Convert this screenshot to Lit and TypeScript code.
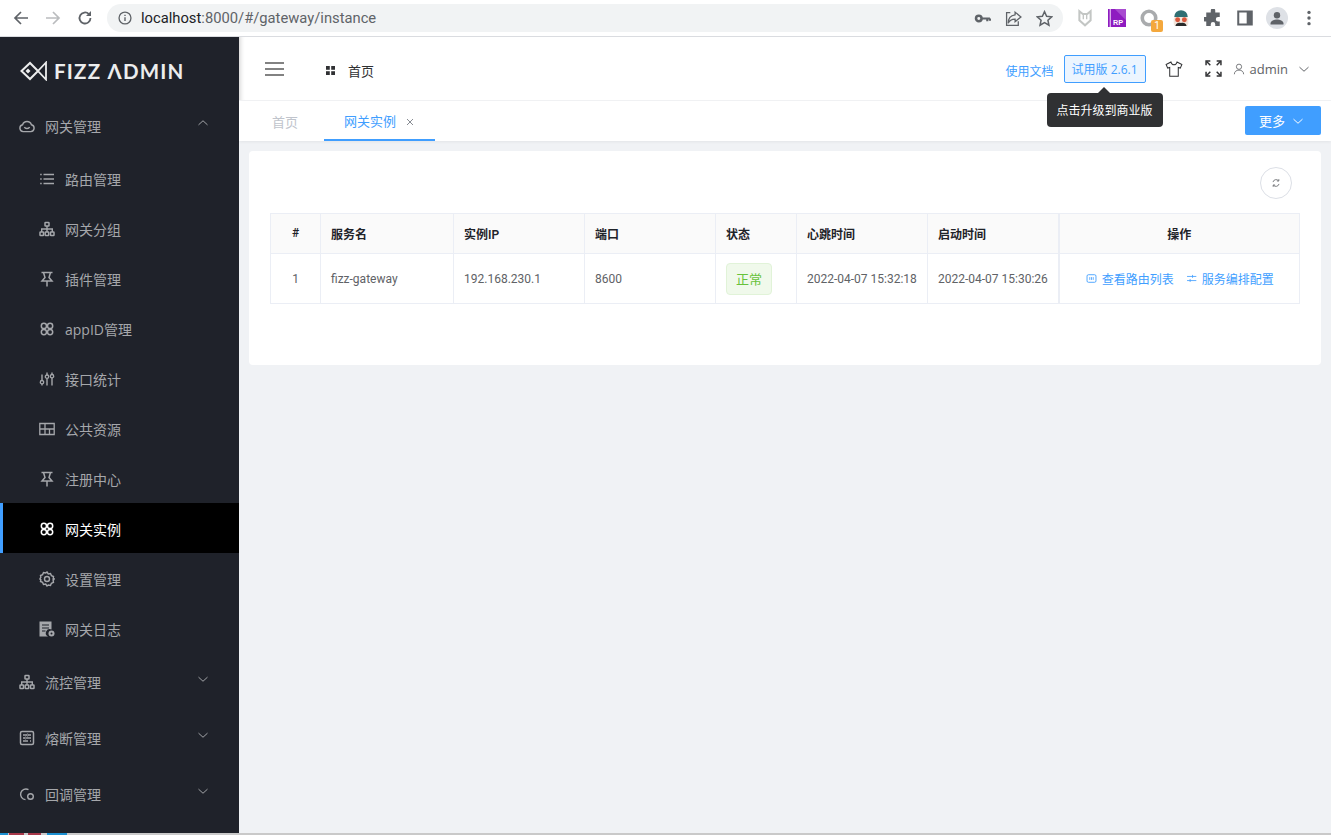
import { LitElement, html, css, svg } from 'lit';
import { customElement } from 'lit/decorators.js';

const s = (body: unknown, box = '0 0 16 16') => html`<svg viewBox=${box} fill="none" stroke="currentColor" stroke-width="1.1">${body}</svg>`;

const ICONS: Record<string, unknown> = {
  cloud: s(svg`<path d="M4.200 13.600a3.500 3.500 0 0 1-.6-6.900 4.600 4.600 0 0 1 8.800 0 3.500 3.500 0 0 1-.6 6.900z" stroke-width="1.400"/><path d="M5.400 9c.8 2 4.400 2 5.200 0" stroke-width="1.400"/>`),
  list: s(svg`<path d="M4.500 3.500H15M4.500 8H15M4.500 12.500H15M1.200 3.500h1.500M1.200 8h1.500M1.200 12.500h1.500" stroke-width="1.500"/>`),
  org: s(svg`<rect x="6" y="1.500" width="4" height="3.500" rx=".6" stroke-width="1.500"/><rect x="1" y="11" width="3.500" height="3.500" rx=".6" stroke-width="1.500"/><rect x="6.200" y="11" width="3.500" height="3.500" rx=".6" stroke-width="1.500"/><rect x="11.500" y="11" width="3.500" height="3.500" rx=".6" stroke-width="1.500"/><path d="M8 5v6M2.700 11V8h10.600v3" stroke-width="1.400"/>`),
  pin: s(svg`<path d="M2.500 1.500h11M4.500 1.500l1.500 5-3 3.500h10l-3-3.500 1.500-5M8 10v5.500" stroke-width="1.500"/>`),
  clover: s(svg`<circle cx="4.900" cy="4.900" r="2.600" stroke-width="1.500"/><circle cx="11.100" cy="4.900" r="2.600" stroke-width="1.500"/><circle cx="4.900" cy="11.100" r="2.600" stroke-width="1.500"/><circle cx="11.100" cy="11.100" r="2.600" stroke-width="1.500"/>`),
  sliders: s(svg`<path d="M3 3.500v6M3 13v1.500M8 1.500V4M8 7.500v7M13 1.500v2M13 7v7.500" stroke-width="1.400"/><circle cx="3" cy="11.200" r="1.700" stroke-width="1.300"/><circle cx="8" cy="5.700" r="1.700" stroke-width="1.300"/><circle cx="13" cy="5.200" r="1.700" stroke-width="1.300"/>`),
  layout: s(svg`<path d="M.8 2.500h14.400v11H.8zM.8 8h14.400M6 2.500v11M10.500 8v5.500" stroke-width="1.300"/>`),
  gear: s(svg`<path d="M8 1l1.300 1.900 2.200-.4.900 2.100 2.100.9-.4 2.500 1 .000-1 1.600.4 1.800-2.100.9-.9 2.100-2.200-.4L8 15l-1.300-1.900-2.200.4-.9-2.100-2.100-.9.4-1.800L.9 8l1-1.900-.4-1.600 2.100-.9.900-2.100 2.200.4z" stroke-width="1.400"/><circle cx="8" cy="8" r="2.500" stroke-width="1.400"/>`),
  log: s(svg`<path d="M.5 .500h12v8a3.800 3.800 0 0 0-3.500 7H.5z" fill="currentColor" stroke="none"/><path d="M3 4h7M3 7h7M3 10h3.500" stroke="#1f222a" stroke-width="1.100"/><circle cx="12.500" cy="12.500" r="3" fill="currentColor" stroke="none"/><circle cx="12.500" cy="12.500" r="1" fill="#1f222a" stroke="none"/>`),
  panel: s(svg`<rect x="1.500" y="1.500" width="13" height="13" rx="1.500" stroke-width="1.500"/><path d="M4 5h3.500M9.500 5H12M4 8h1.500M8 8h4M4 11h5M11 11h1" stroke-width="1.300"/><circle cx="8.500" cy="5" r="1" stroke-width="1"/><circle cx="6.500" cy="8" r="1" stroke-width="1"/>`),
  callback: s(svg`<path d="M9.500 3.700A5.300 5.300 0 1 0 6.500 13.600" stroke-width="1.400"/><circle cx="11.500" cy="10.500" r="2.800" stroke-width="1.400"/>`),
  up: s(svg`<path d="M2 10.500L8 5l6 5.500" stroke-width="1.300"/>`),
  down: s(svg`<path d="M2 5.500L8 11l6-5.500" stroke-width="1.300"/>`),
  shirt: s(svg`<path d="M5.300 1.800L1 4l1.400 3.200 1.800-.6V14.500h7.600V6.600l1.800.6L15 4l-4.300-2.200C10.300 3.300 9.300 4.200 8 4.200S5.700 3.300 5.300 1.800z" stroke-width=".9"/>`),
  expand: s(svg`<path d="M1 5V1h4M11 1h4v4M15 11v4h-4M5 15H1v-4" stroke-width="1.400"/><path d="M1.500 1.500l3.500 3.500M14.500 1.500L11 5M14.500 14.500L11 11M1.500 14.500L5 11" stroke-width="1.400"/>`),
  user: s(svg`<circle cx="8" cy="5" r="3.500"/><path d="M1.800 15c0-3.600 2.700-5.500 6.200-5.500s6.200 1.900 6.200 5.500"/>`),
  grid: html`<svg viewBox="0 0 10 10" fill="currentColor"><rect width="4.200" height="4.200"/><rect x="5.800" width="4.200" height="4.200"/><rect y="5.800" width="4.200" height="4.200"/><rect x="5.800" y="5.800" width="4.200" height="4.200"/></svg>`,
  refresh: s(svg`<path d="M3.200 6.500A5 5 0 0 1 12 4.500M12.800 9.500A5 5 0 0 1 4 11.500" stroke-width="1.300"/><path d="M12.500 1.800v3h-3M3.500 14.200v-3h3" stroke-width="1.300"/>`),
  screen: s(svg`<rect x="1.500" y="2.500" width="13" height="11" rx="2" stroke-width="1.300"/><path d="M5.500 6v4M8 6v4M10.500 6v4" stroke-width="1.200"/>`),
  tune: s(svg`<path d="M1.500 5H15M1.500 11H15" stroke-width="1.200"/><path d="M9.500 2.800V7M6 8.800V13" stroke-width="1.200"/>`),
};

@customElement('app-root')
export class AppRoot extends LitElement {
  static styles = css`
    :host {
      display: flex;
      flex-direction: column;
      width: 1331px;
      height: 835px;
      overflow: hidden;
      font-family: "Open Sans", "Noto Sans CJK SC", sans-serif;
      font-size: 12px;
      color: #606266;
      background: #f0f2f5;
    }
    svg { display: block; }
    .chrome {
      display: flex;
      align-items: center;
      height: 36px;
      flex: none;
      background: #fff;
      border-bottom: 1px solid #dadce0;
      color: #5f6368;
    }
    .nav { display: flex; align-items: center; padding-left: 13px; gap: 16px; }
    .nav svg { width: 16px; height: 16px; }
    .nav .off { color: #babcbe; }
    .omni {
      display: flex;
      align-items: center;
      margin-left: 14px;
      width: 956px;
      height: 28px;
      box-sizing: border-box;
      padding: 0 10px 0 11px;
      background: #f1f3f4;
      border-radius: 14px;
      font-family: Roboto, sans-serif;
      font-size: 14.750px;
      color: #5f6368;
    }
    .omni .host { color: #202124; }
    .omni .info { width: 14px; height: 14px; margin-right: 9px; flex: none; }
    .omni .url { flex: 1; }
    .omni-icons { display: flex; align-items: center; gap: 14px; }
    .omni-icons svg { width: 17px; height: 17px; }
    .exts { display: flex; align-items: center; margin-left: 12px; gap: 12px; }
    .ext { position: relative; width: 20px; height: 20px; display: flex; align-items: center; justify-content: center; }
    .ext svg { width: 18px; height: 18px; }
    .ext .badge {
      position: absolute;
      right: -4px;
      bottom: -4px;
      width: 12px;
      height: 12px;
      border-radius: 2px;
      background: #f4a83d;
      color: #fff;
      font: 10px/12px Roboto, sans-serif;
      text-align: center;
    }
    .page { flex: 1; display: flex; min-height: 0; }
    .side {
      width: 239px;
      flex: none;
      background: #1f222a;
      color: #a5a7ab;
      font-size: 14px;
      overflow: hidden;
    }
    .logo {
      display: flex;
      align-items: center;
      gap: 7px;
      height: 60px;
      box-sizing: border-box;
      padding: 8px 0 0 20px;
      color: #eceded;
    }
    .logo svg { width: 27px; height: 20px; flex: none; }
    .logo span {
      font-family: "Lato", sans-serif;
      font-weight: 700;
      font-size: 20.500px;
      letter-spacing: 1.200px;
      line-height: 20px;
    }
    .item {
      display: flex;
      align-items: center;
      box-sizing: border-box;
      padding-top: 2px;
    }
    .item > svg { width: 16px; height: 16px; flex: none; margin-right: 10px; }
    .item.top { height: 56px; padding-left: 19px; }
    .item.sub { height: 50px; padding-left: 39px; }
    .item.sub.active {
      padding-left: 36px;
      border-left: 3px solid #409eff;
      background: #000;
      color: #fff;
    }
    .item .chev { margin: -6px 0 0 auto; width: 12px; height: 12px; padding-right: 30px; flex: none; }
    .chev svg { width: 12px; height: 12px; }
    .main { flex: 1; display: flex; flex-direction: column; min-width: 0; }
    .header {
      display: flex;
      align-items: center;
      height: 64px;
      flex: none;
      box-sizing: border-box;
      background: #fff;
      box-shadow: inset 6px 0 5px -5px rgba(0, 0, 0, .2);
      border-bottom: 1px solid #f2f3f5;
      padding: 0 21px 0 26px;
    }
    .burger { width: 19px; height: 14px; flex: none; color: #5a5a5a; }
    .crumb { display: flex; align-items: center; margin-left: 42px; color: #303133; font-size: 13px; padding-top: 4px; }
    .crumb svg { width: 9px; height: 9px; margin-right: 13px; }
    .right { margin-left: auto; display: flex; align-items: center; }
    .docs { color: #409eff; padding-top: 4px; }
    .trial {
      position: relative;
      margin-left: 10px;
      width: 82px;
      height: 28px;
      box-sizing: border-box;
      border: 1px solid #409eff;
      border-radius: 2px;
      background: #ecf5ff;
      color: #409eff;
      display: flex;
      align-items: center;
      justify-content: center;
    }
    .tip {
      position: absolute;
      left: -18px;
      top: 37px;
      width: 116px;
      height: 34px;
      border-radius: 4px;
      background: #303133;
      color: #fff;
      display: flex;
      align-items: center;
      justify-content: center;
      z-index: 2;
    }
    .tip::before {
      content: "";
      position: absolute;
      left: 51px;
      top: -6px;
      border: 6px solid transparent;
      border-top: 0;
      border-bottom-color: #303133;
    }
    .shirt { width: 18px; height: 18px; margin-left: 19px; color: #303133; }
    .expand { width: 17px; height: 17px; margin-left: 22px; color: #303133; }
    .user { width: 12px; height: 12px; margin-left: 11px; color: #606266; }
    .name { margin-left: 5px; font-size: 13px; color: #606266; }
    .user-chev { width: 12px; height: 12px; margin-left: 10px; color: #606266; }
    .tabs {
      display: flex;
      align-items: stretch;
      height: 40px;
      flex: none;
      box-sizing: border-box;
      background: #fff;
      box-shadow: 0 1px 3px rgba(0, 0, 0, .06);
      padding: 0 10px 0 33px;
      font-size: 13px;
    }
    .tab { display: flex; align-items: center; color: #c0c4cc; padding-top: 1px; box-sizing: border-box; }
    .tab.on {
      margin-left: 26px;
      width: 111px;
      padding-left: 20px;
      color: #409eff;
      border-bottom: 2px solid #409eff;
    }
    .tab.on svg { width: 8px; height: 8px; margin: 2px 0 0 10px; color: #7a7f87; }
    .more {
      margin: 5px 0 0 auto;
      width: 76px;
      height: 29px;
      box-sizing: border-box;
      padding-left: 14px;
      border-radius: 2px;
      background: #409eff;
      color: #fff;
      display: flex;
      align-items: center;
      gap: 7px;
    }
    .more svg { width: 12px; height: 12px; }
    .content { flex: 1; padding: 10px; min-height: 0; }
    .card {
      height: 214px;
      box-sizing: border-box;
      background: #fff;
      border-radius: 4px;
      padding: 16px 21px 0;
    }
    .tools { display: flex; justify-content: flex-end; padding-right: 8px; margin-bottom: 14px; }
    .round {
      width: 32px;
      height: 32px;
      box-sizing: border-box;
      border: 1px solid #dcdfe6;
      border-radius: 50%;
      display: flex;
      align-items: center;
      justify-content: center;
      color: #606266;
    }
    .round svg { width: 10px; height: 10px; }
    table {
      width: 1029px;
      table-layout: fixed;
      border-collapse: collapse;
      border: 1px solid #ebeef5;
      font-family: Roboto, "Noto Sans CJK SC", sans-serif;
    }
    th, td { border: 1px solid #ebeef5; padding: 0 0 0 10px; text-align: left; box-sizing: border-box; }
    th { height: 40px; padding-bottom: 1px; background: #fafafa; color: #1f2329; font-weight: 600; }
    td { height: 50px; white-space: nowrap; }
    .c { text-align: center; padding: 0; }
    th.c { padding: 0 0 1px; }
    .fixed { border-left-width: 2px; }
    .tag {
      display: inline-flex;
      align-items: center;
      justify-content: center;
      width: 46px;
      height: 32px;
      box-sizing: border-box;
      border: 1px solid #e1f3d8;
      border-radius: 4px;
      background: #f0f9eb;
      color: #67c23a;
      font-size: 13px;
    }
    .ops { display: flex; justify-content: center; gap: 12px; padding-right: 9px; margin-top: -1px; color: #409eff; }
    .ops span { display: flex; align-items: center; gap: 5px; }
    .ops svg { width: 11px; height: 11px; }
    .taskbar { height: 2px; flex: none; background: #c9c9c9; display: flex; }
    .taskbar i { display: block; height: 2px; }
  `;

  private logo() {
    return html`<svg viewBox="0 0 27 20" fill="none" stroke="currentColor" stroke-width="2">
      <path d="M1.500 10L10 2l8 8-8 8z" />
      <path d="M26 1.500L18 10l8 8.500z" stroke-width="1.800" />
      <path d="M8 7.500L5.500 10 8 12.500 10.500 10z" fill="currentColor" stroke="none" />
    </svg>`;
  }

  private sub(icon: string, label: string, active = false) {
    return html`<div class="item sub ${active ? 'active' : ''}">${ICONS[icon]}${label}</div>`;
  }

  private top(icon: string, label: string, open = false) {
    return html`<div class="item top">${ICONS[icon]}${label}<span class="chev">${ICONS[open ? 'up' : 'down']}</span></div>`;
  }

  private chrome() {
    return html`<div class="chrome">
      <div class="nav">
        ${s(svg`<path d="M15 8H2M8 2L2 8l6 6" stroke-width="1.700"/>`)}
        <span class="off">${s(svg`<path d="M1 8h13M8 2l6 6-6 6" stroke-width="1.700"/>`)}</span>
        ${s(svg`<path d="M13.500 8a5.500 5.500 0 1 1-1.600-3.900" stroke-width="1.800"/><path d="M14 1v5H9z" fill="currentColor" stroke="none"/>`)}
      </div>
      <div class="omni">
        <span class="info">${s(svg`<circle cx="8" cy="8" r="6.800" stroke-width="1.500"/><path d="M8 7v4.500M8 4.300v1.400" stroke-width="1.600"/>`)}</span>
        <span class="url"><span class="host">localhost</span>:8000/#/gateway/instance</span>
        <div class="omni-icons">
          ${s(svg`<circle cx="4.500" cy="8" r="2.600" stroke-width="2.400"/><path d="M7 8h8M12.500 8v2.500M15 8v2" stroke-width="2"/>`)}
          ${s(svg`<path d="M9.500 2L15 6.500 9.500 11V8.500C6 8.500 4 10 3 12.500 3 8 5.500 5 9.500 4.500z" stroke-width="1.200"/><path d="M5 2.500H1.500v12h11v-4" stroke-width="1.200"/>`)}
          ${s(svg`<path d="M8 1.500l2 4.400 4.800.5-3.600 3.200 1 4.700L8 11.900l-4.200 2.400 1-4.700L1.200 6.400 6 5.900z" stroke-width="1.400"/>`)}
        </div>
      </div>
      <div class="exts">
        <span class="ext" style="color:#c3c6c4">${s(svg`<path d="M3 2l3 2.500h4L13 2v8l-5 4.500L3 10z" stroke-width="1.800"/><path d="M6.500 5v4M9.500 5v4" stroke-width="1.200"/>`)}</span>
        <span class="ext">${html`<svg viewBox="0 0 16 16"><rect width="16" height="16" fill="#8e1cc0"/><rect x="1.500" width="1" height="16" fill="#e8c8f2"/><path d="M6 0h10v10z" fill="#a84bd0"/><text x="4.500" y="14" font-size="6.500" font-family="Liberation Sans" font-weight="700" fill="#fff">RP</text></svg>`}</span>
        <span class="ext" style="color:#a9abad">${s(svg`<circle cx="8" cy="8" r="6" stroke-width="3.200"/>`)}<span class="badge">1</span></span>
        <span class="ext">${html`<svg viewBox="0 0 16 16"><path d="M2 7a6 6 0 0 1 12 0z" fill="#2f6f73"/><rect x="1.500" y="7" width="13" height="8" rx="2" fill="#f3e6dc"/><circle cx="5" cy="9.500" r="2.200" fill="#d9573b"/><circle cx="11" cy="9.500" r="2.200" fill="#d9573b"/><path d="M3 15c1-3 3-3 5-2.500 2-.500 4-.500 5 2.500z" fill="#2a2a2a"/></svg>`}</span>
        <span class="ext" style="color:#5f6368">${html`<svg viewBox="0 0 16 16" fill="currentColor"><path d="M6 1.500a2 2 0 0 1 4 0V3h4v4h-1.500a2 2 0 0 0 0 4H14v4h-4v-1.500a2 2 0 0 0-4 0V15H2v-4H.500a2 2 0 0 1 0-4H2V3h4z"/></svg>`}</span>
        <span class="ext" style="color:#5f6368">${s(svg`<path d="M2 2.200h12v11.600H2z" stroke-width="1.800"/><rect x="9.500" y="2" width="4.500" height="12" fill="currentColor" stroke="none"/>`)}</span>
        <span class="ext">${html`<svg viewBox="0 0 22 22" style="width:22px;height:22px;flex:none"><circle cx="11" cy="11" r="11" fill="#dee1e6"/><circle cx="11" cy="8.200" r="3.200" fill="#5f6368"/><path d="M4.500 16.500c0-2.800 4-4 6.500-4s6.500 1.200 6.500 4v1H4.500z" fill="#5f6368"/></svg>`}</span>
        <span class="ext">${html`<svg viewBox="0 0 16 16" fill="#5f6368"><circle cx="8" cy="3" r="1.500"/><circle cx="8" cy="8" r="1.500"/><circle cx="8" cy="13" r="1.500"/></svg>`}</span>
      </div>
    </div>`;
  }

  render() {
    return html`
      ${this.chrome()}
      <div class="page">
        <aside class="side">
          <div class="logo">${this.logo()}<span>FIZZ ΛDMIN</span></div>
          ${this.top('cloud', '网关管理', true)}
          ${this.sub('list', '路由管理')}
          ${this.sub('org', '网关分组')}
          ${this.sub('pin', '插件管理')}
          ${this.sub('clover', 'appID管理')}
          ${this.sub('sliders', '接口统计')}
          ${this.sub('layout', '公共资源')}
          ${this.sub('pin', '注册中心')}
          ${this.sub('clover', '网关实例', true)}
          ${this.sub('gear', '设置管理')}
          ${this.sub('log', '网关日志')}
          ${this.top('org', '流控管理')}
          ${this.top('panel', '熔断管理')}
          ${this.top('callback', '回调管理')}
        </aside>
        <div class="main">
          <header class="header">
            <svg class="burger" viewBox="0 0 19 14" stroke="currentColor" stroke-width="1.500"><path d="M0 1h19M0 7h19M0 13h19" /></svg>
            <div class="crumb">${ICONS.grid}首页</div>
            <div class="right">
              <span class="docs">使用文档</span>
              <div class="trial">试用版 2.6.1<div class="tip">点击升级到商业版</div></div>
              <span class="shirt">${ICONS.shirt}</span>
              <span class="expand">${ICONS.expand}</span>
              <span class="user">${ICONS.user}</span>
              <span class="name">admin</span>
              <span class="user-chev">${ICONS.down}</span>
            </div>
          </header>
          <nav class="tabs">
            <div class="tab">首页</div>
            <div class="tab on">网关实例${s(svg`<path d="M2 2l12 12M14 2L2 14" stroke-width="1.800"/>`)}</div>
            <div class="more">更多${ICONS.down}</div>
          </nav>
          <div class="content">
            <section class="card">
              <div class="tools"><span class="round">${ICONS.refresh}</span></div>
              <table>
                <colgroup>
                  <col style="width:50px" /><col style="width:133px" /><col style="width:131px" /><col style="width:131px" />
                  <col style="width:81px" /><col style="width:131px" /><col style="width:131px" /><col style="width:241px" />
                </colgroup>
                <thead>
                  <tr>
                    <th class="c">#</th><th>服务名</th><th>实例IP</th><th>端口</th><th>状态</th><th>心跳时间</th><th>启动时间</th>
                    <th class="c fixed">操作</th>
                  </tr>
                </thead>
                <tbody>
                  <tr>
                    <td class="c">1</td><td>fizz-gateway</td><td>192.168.230.1</td><td>8600</td>
                    <td><span class="tag">正常</span></td>
                    <td>2022-04-07 15:32:18</td><td>2022-04-07 15:30:26</td>
                    <td class="fixed">
                      <div class="ops">
                        <span>${ICONS.screen}查看路由列表</span>
                        <span>${ICONS.tune}服务编排配置</span>
                      </div>
                    </td>
                  </tr>
                </tbody>
              </table>
            </section>
          </div>
        </div>
      </div>
      <div class="taskbar">
        <i style="width:8px;background:#1b8fd0"></i><i style="width:1px;background:#c9c9c9"></i>
        <i style="width:15px;background:#a8384a"></i><i style="width:4px;background:#c9c9c9"></i>
        <i style="width:13px;background:#a8384a"></i><i style="width:6px;background:#c9c9c9"></i>
        <i style="width:20px;background:#1b8fd0"></i>
      </div>
    `;
  }
}
